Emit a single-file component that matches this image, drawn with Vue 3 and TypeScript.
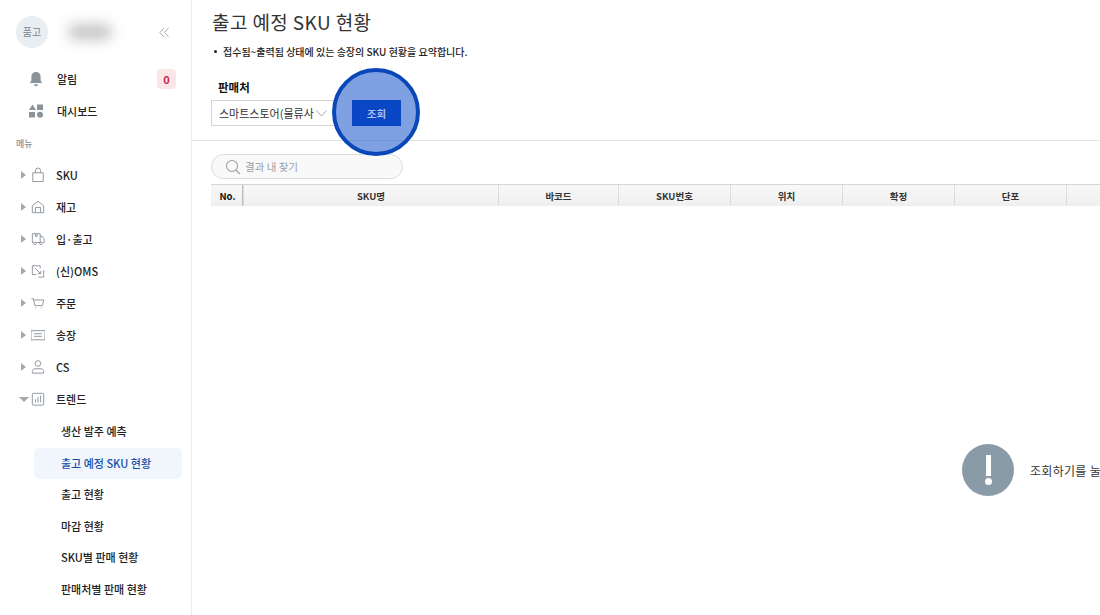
<script setup lang="ts">
interface MenuItem { label: string; icon: string; open?: boolean }
const menu: MenuItem[] = [
  { label: 'SKU', icon: 'bag' },
  { label: '재고', icon: 'home' },
  { label: '입·출고', icon: 'truck' },
  { label: '(신)OMS', icon: 'oms' },
  { label: '주문', icon: 'cart' },
  { label: '송장', icon: 'invoice' },
  { label: 'CS', icon: 'user' },
  { label: '트렌드', icon: 'chart', open: true },
]
const subs = ['생산 발주 예측', '출고 예정 SKU 현황', '출고 현황', '마감 현황', 'SKU별 판매 현황', '판매처별 판매 현황', '로케이션별 현황']
const cols = [
  { t: 'No.', w: 32 }, { t: 'SKU명', w: 255 }, { t: '바코드', w: 120 }, { t: 'SKU번호', w: 112 },
  { t: '위치', w: 112 }, { t: '확정', w: 112 }, { t: '단포', w: 112 }, { t: '', w: 112 },
]
</script>

<template>
  <div class="page">
    <aside class="side">
      <div class="profile">
        <div class="avatar">품고</div>
        <div class="blurname"></div>
        <svg class="collapse" width="11" height="11" viewBox="0 0 12 12" fill="none" stroke="#a5a5a5" stroke-width="1">
          <path d="M5.500 1 L1 6 L5.500 11 M10.500 1 L6 6 L10.500 11" />
        </svg>
      </div>
      <div class="top-row r-alarm">
        <svg class="top-icon" width="16" height="16" viewBox="0 0 16 16" fill="#8a929a">
          <path d="M8 1c-3 0-4.600 2.300-4.600 5v3.500L1.800 12h12.400l-1.600-2.500V6C12.600 3.300 11 1 8 1z" />
          <path d="M6 13.200a2 2 0 0 0 4 0z" />
        </svg>
        <span class="top-label">알림</span>
        <span class="badge">0</span>
      </div>
      <div class="top-row">
        <svg class="top-icon" width="16" height="16" viewBox="0 0 16 16" fill="#8a929a">
          <path d="M4.500 1.500 L8 7 H1z" />
          <rect x="9" y="1.500" width="6" height="5.500" />
          <rect x="1" y="9" width="6" height="5.500" />
          <circle cx="12" cy="11.800" r="3" />
        </svg>
        <span class="top-label">대시보드</span>
      </div>
      <div class="section">메뉴</div>
      <div v-for="m in menu" :key="m.label" class="menu-row">
        <span :class="m.open ? 'caret-down' : 'caret-right'"></span>
        <svg class="menu-icon" width="14" height="16" viewBox="0 0 16 18" fill="none" stroke="#8f969c" stroke-width="1.100">
          <template v-if="m.icon === 'bag'">
            <path d="M2 6.500h12v10H2z" /><path d="M5 6.500V4a3 3 0 0 1 6 0v2.500" />
          </template>
          <template v-else-if="m.icon === 'home'">
            <path d="M1.500 7.500L8 2.500l6.500 5v8h-13z" /><path d="M5 15.500V9.500h6v6" />
          </template>
          <template v-else-if="m.icon === 'truck'">
            <path d="M3 13H1.500V3h9v10H6" /><path d="M10.500 6h2.500l2 3v4h-1.500" /><path d="M5 3v3h2V3" />
            <circle cx="4.500" cy="14" r="1.500" /><circle cx="11.500" cy="14" r="1.500" />
          </template>
          <template v-else-if="m.icon === 'oms'">
            <path d="M6 13H1.500V3h9v3" /><path d="M14.500 8v8h-6" /><path d="M5 6l6 6M11 9v3H8" />
          </template>
          <template v-else-if="m.icon === 'cart'">
            <path d="M0.500 4h2l2 8h8.500l1.500-6.500H3" /><path d="M5 14.500h1M11 14.500h1" />
          </template>
          <template v-else-if="m.icon === 'invoice'">
            <path d="M0 4h16v10.500H0z" /><path d="M3.500 7.500h9M3.500 10.500h9" />
          </template>
          <template v-else-if="m.icon === 'user'">
            <circle cx="8" cy="5" r="3.200" /><path d="M1.500 16v-2c0-2 1.500-3 3-3h7c1.500 0 3 1 3 3v2z" />
          </template>
          <template v-else>
            <rect x="1.500" y="2.500" width="13" height="13.500" rx="1" /><path d="M5 13V9M8 13V6.500M11 13V5" />
          </template>
        </svg>
        <span class="menu-label">{{ m.label }}</span>
      </div>
      <div class="subs">
        <div
          v-for="(s, i) in subs"
          :key="s"
          class="sub-row"
          :class="{ active: i === 1 }"
        >{{ s }}</div>
      </div>
    </aside>

    <main class="main">
      <h1 class="title">출고 예정 SKU 현황</h1>
      <p class="desc"><span class="dot"></span>접수됨~출력됨 상태에 있는 송장의 SKU 현황을 요약합니다.</p>
      <div class="filter">
        <div class="filter-label">판매처</div>
        <div class="filter-row">
          <div class="select">
            <span class="select-text">스마트스토어(물류사</span>
            <svg width="11" height="7" viewBox="0 0 11 7" fill="none" stroke="#aaa" stroke-width="1"><path d="M0.500 0.500L5.500 6L10.500 0.500" /></svg>
          </div>
          <div class="btn-wrap">
            <span class="spot"></span>
            <button class="btn">조회</button>
          </div>
        </div>
      </div>
      <div class="results">
        <div class="search">
          <svg width="16" height="16" viewBox="0 0 16 16" fill="none" stroke="#9aa0a6" stroke-width="1.100">
            <circle cx="7" cy="7" r="5.500" /><path d="M11 11l4 4" />
          </svg>
          <span>결과 내 찾기</span>
        </div>
        <div class="thead">
          <div v-for="(c, i) in cols" :key="i" class="th" :class="{ first: i === 0 }" :style="{ width: c.w + 'px' }">{{ c.t }}</div>
        </div>
        <div class="empty">
          <div class="alert"><span class="bar"></span><span class="pt"></span></div>
          <span class="empty-text">조회하기를 눌러주세요</span>
        </div>
      </div>
    </main>
  </div>
</template>

<style>
html, body { margin: 0; background: #fff; overflow: hidden; }
</style>

<style scoped>
.page {
  display: flex;
  width: 1100px;
  height: 615px;
  overflow: hidden;
  background: #fff;
  color: #222;
  font-family: "Noto Sans CJK KR", "Liberation Sans", sans-serif;
}
.side {
  flex: none;
  box-sizing: border-box;
  width: 192px;
  height: 615px;
  border-right: 1px solid #ececec;
  overflow: hidden;
}
.profile {
  display: flex;
  align-items: center;
  height: 32px;
  padding: 16px 0 0 16px;
}
.avatar {
  width: 32px;
  height: 32px;
  border-radius: 50%;
  background: #e9eef2;
  color: #7d868e;
  font-size: 10px;
  line-height: 32px;
  text-align: center;
}
.blurname {
  width: 44px;
  height: 14px;
  margin-left: 20px;
  border-radius: 7px;
  background: #bdbdbd;
  filter: blur(7px);
}
.collapse { margin-left: 47px; }
.top-row {
  display: flex;
  align-items: center;
  height: 32px;
  padding-left: 28px;
}
.r-alarm { margin-top: 15px; }
.top-icon { flex: none; }
.top-label {
  margin-left: 13px;
  font-size: 11px;
  font-weight: 500;
  color: #222;
}
.badge {
  width: 19px;
  height: 20px;
  margin-left: auto;
  margin-right: 15px;
  border-radius: 4px;
  background: #fbe6e8;
  color: #c5304a;
  font-size: 11px;
  font-weight: 700;
  line-height: 20px;
  text-align: center;
}
.section {
  height: 32px;
  padding-left: 16px;
  font-size: 9px;
  font-weight: 500;
  line-height: 34px;
  color: #8a9299;
}
.menu-row {
  display: flex;
  align-items: center;
  height: 32px;
  padding-left: 21px;
}
.caret-right {
  width: 0;
  height: 0;
  margin-right: 5px;
  border-left: 5px solid #a3a9ae;
  border-top: 4px solid transparent;
  border-bottom: 4px solid transparent;
}
.caret-down {
  width: 0;
  height: 0;
  margin-left: -2px;
  margin-right: 2px;
  border-top: 5px solid #a3a9ae;
  border-left: 5px solid transparent;
  border-right: 5px solid transparent;
}
.menu-icon { flex: none; }
.menu-label {
  margin-left: 11px;
  font-size: 11px;
  font-weight: 500;
  color: #222;
}
.subs { padding-top: 1px; }
.sub-row {
  box-sizing: border-box;
  width: 148px;
  height: 31.600px;
  margin-left: 34px;
  padding-left: 27px;
  border-radius: 5px;
  font-size: 11px;
  font-weight: 500;
  line-height: 31px;
  color: #222;
  white-space: nowrap;
}
.sub-row.active {
  background: #f1f6fd;
  color: #174ea6;
}
.main {
  flex: 1;
  min-width: 0;
}
.title {
  margin: 0;
  padding: 8px 0 0 20px;
  height: 31px;
  font-size: 19px;
  font-weight: 400;
  line-height: 28px;
  letter-spacing: 0.400px;
  color: #333;
}
.desc {
  display: flex;
  align-items: center;
  margin: 0;
  padding: 5px 0 0 22px;
  height: 15px;
  font-size: 10px;
  font-weight: 500;
  line-height: 16px;
  color: #222;
}
.dot {
  width: 3px;
  height: 3px;
  margin-right: 6px;
  border-radius: 50%;
  background: #222;
}
.filter {
  box-sizing: border-box;
  height: 82px;
  padding: 21px 0 0 19px;
  border-bottom: 1px solid #e4e4e4;
}
.filter-label {
  height: 20px;
  padding-left: 7px;
  font-size: 11.500px;
  font-weight: 700;
  line-height: 14px;
  color: #111;
}
.filter-row {
  display: flex;
  align-items: flex-start;
}
.select {
  box-sizing: border-box;
  display: flex;
  align-items: center;
  width: 124px;
  height: 26px;
  padding-left: 7px;
  border: 1px solid #d4d4d4;
  font-size: 11px;
  color: #333;
}
.select-text { white-space: nowrap; }
.select svg { flex: none; margin-left: 2px; }
.btn-wrap {
  position: relative;
  margin-left: 17px;
}
.btn {
  position: relative;
  display: block;
  width: 49px;
  height: 26px;
  padding: 0;
  border: 0;
  background: #0a47c4;
  color: #a9c0ee;
  font-family: inherit;
  font-size: 10.500px;
  font-weight: 700;
}
.spot {
  position: absolute;
  left: -20px;
  top: -32px;
  box-sizing: border-box;
  width: 88px;
  height: 88px;
  border: 4px solid #0a47b8;
  border-radius: 50%;
  background: rgba(10, 75, 200, 0.520);
}
.results { padding: 13px 0 0 19px; }
.search {
  box-sizing: border-box;
  display: flex;
  align-items: center;
  gap: 4px;
  width: 192px;
  height: 25px;
  padding-left: 13px;
  border: 1px solid #d8dcdf;
  border-radius: 13px;
  background: #f9f9f9;
  font-size: 10.500px;
  color: #9a9fa4;
}
.thead {
  display: flex;
  width: 1000px;
  height: 21px;
  margin-top: 5px;
  border-top: 1px solid #d6d6d6;
  background: linear-gradient(#f8f8f8, #efefef);
}
.th {
  box-sizing: border-box;
  flex: none;
  border-left: 1px solid #dcdcdc;
  font-size: 9.500px;
  font-weight: 700;
  line-height: 22px;
  text-align: center;
  color: #333;
}
.th.first {
  padding-left: 2px;
  border-left: 0;
  border-right: 1px solid #bdbdbd;
  color: #111;
}
.empty {
  display: flex;
  align-items: center;
  height: 52px;
  margin-top: 238px;
  padding-left: 751px;
  white-space: nowrap;
}
.alert {
  position: relative;
  flex: none;
  width: 52px;
  height: 52px;
  border-radius: 50%;
  background: #8a9ba8;
}
.bar {
  position: absolute;
  left: 23.500px;
  top: 11px;
  width: 5px;
  height: 21px;
  background: #fff;
}
.pt {
  position: absolute;
  left: 22.500px;
  top: 34px;
  width: 7px;
  height: 7px;
  border-radius: 50%;
  background: #fff;
}
.empty-text {
  margin-left: 16px;
  font-size: 12px;
  color: #333;
  letter-spacing: 0.300px;
}
</style>
